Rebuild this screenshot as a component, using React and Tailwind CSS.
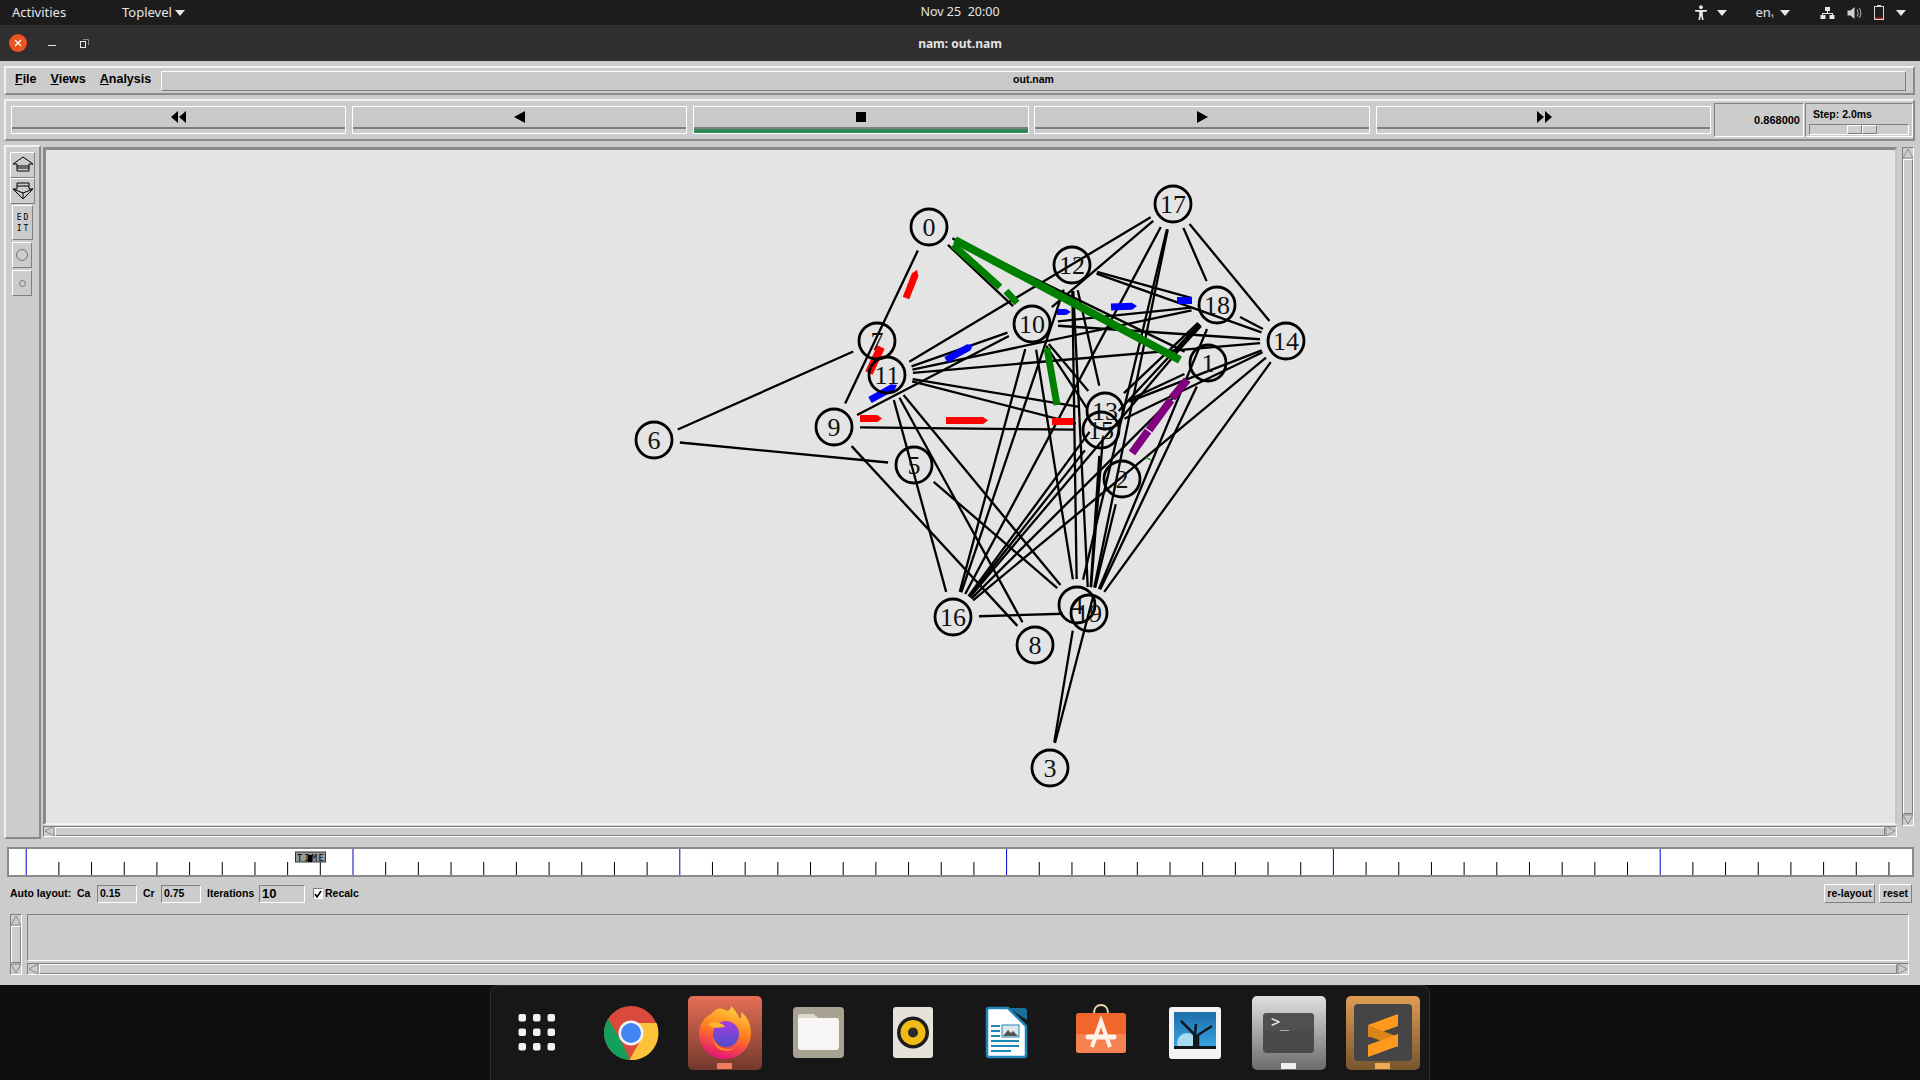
import React from "react";

const raised = "border border-t-white border-l-white border-b-[#7f7f7f] border-r-[#7f7f7f]";
const sunken = "border border-t-[#7f7f7f] border-l-[#7f7f7f] border-b-white border-r-white";
const groove = "border-2 border-t-[#f2f2f2] border-l-[#f2f2f2] border-b-[#8a8a8a] border-r-[#8a8a8a]";
const tkFont = "font-['Liberation_Sans',Arial,sans-serif] font-bold text-black";

const nodes = {
  0: [929, 227], 1: [1208, 363], 2: [1122, 479], 3: [1050, 768], 4: [1077, 605],
  5: [914, 465], 6: [654, 440], 7: [877, 341], 8: [1035, 645], 9: [834, 427],
  10: [1032, 324], 11: [887, 375], 12: [1072, 265], 13: [1105, 411], 14: [1286, 341],
  15: [1101, 430], 16: [953, 617], 17: [1173, 204], 18: [1217, 305], 19: [1089, 613],
};

const edges = [
  [6, 7], [6, 5], [0, 9], [0, 10], [0, 1], [9, 10], [9, 15], [9, 8], [11, 10], [11, 17],
  [11, 18], [11, 14], [11, 13], [11, 15], [11, 16], [11, 8], [11, 4], [5, 4], [16, 19],
  [4, 3], [10, 16], [12, 16], [17, 16], [18, 16], [14, 16], [1, 16], [13, 16],
  [15, 16], [10, 4], [12, 4], [12, 19], [17, 4], [17, 19], [17, 10], [10, 15],
  [10, 13], [12, 13], [10, 18], [10, 14], [12, 18], [12, 14], [17, 18], [17, 14], [18, 14],
  [14, 13], [14, 15], [14, 19], [18, 13], [18, 15], [18, 19], [1, 19], [15, 19],
  [13, 19], [2, 19], [1, 13],
];

// line between two nodes, stopped short of the circles
function edgeLine(a, b) {
  const [x1, y1] = nodes[a];
  const [x2, y2] = nodes[b];
  const len = Math.hypot(x2 - x1, y2 - y1);
  const ux = (x2 - x1) / len;
  const uy = (y2 - y1) / len;
  return { x1: x1 + ux * 26, y1: y1 + uy * 26, x2: x2 - ux * 26, y2: y2 - uy * 26 };
}

// colour, width, tail x/y, nose x/y, pointed nose or not
const packets = [
  ["#ff0000", 7, 906, 298, 917, 270, true],
  ["#ff0000", 8, 869, 373, 881, 347, false],
  ["#0000ff", 7, 870, 400, 897, 385, true],
  ["#0000ff", 7, 946, 360, 973, 345, true],
  ["#ff0000", 7, 860, 418.5, 882, 418.5, true],
  ["#ff0000", 7, 946, 420.5, 988, 420.5, true],
  ["#ff0000", 7, 1052, 421.5, 1073, 421.5, false],
  ["#0000ff", 6, 1057, 312, 1071, 312, true],
  ["#0000ff", 7, 1111, 307, 1137, 306, true],
  ["#0000ff", 7, 1177, 300.5, 1192, 300.5, false],
  ["#008000", 8, 955, 240, 1180, 360, false],
  ["#008000", 7, 953, 245, 1000, 287, false],
  ["#008000", 7, 1006, 291, 1017, 303, false],
  ["#008000", 7, 1047, 348, 1057, 405, false],
  ["#800080", 8, 1187, 380, 1172, 398, false],
  ["#800080", 8, 1171, 400, 1149, 430, false],
  ["#800080", 8, 1148, 431, 1132, 453, false],
  ["#000000", 5, 1200, 325, 1175, 352, false],
  ["#008000", 1, 1145, 457, 1151, 460, false],
];

function packetPoints(w, x1, y1, x2, y2, nose) {
  const len = Math.hypot(x2 - x1, y2 - y1);
  const ux = (x2 - x1) / len;
  const uy = (y2 - y1) / len;
  const nx = (-uy * w) / 2;
  const ny = (ux * w) / 2;
  const tip = nose ? 5 : 0;
  const bx = x2 - ux * tip;
  const by = y2 - uy * tip;
  const pts = [[x1 + nx, y1 + ny], [bx + nx, by + ny]];
  if (nose) pts.push([x2, y2]);
  pts.push([bx - nx, by - ny], [x1 - nx, y1 - ny]);
  return pts.map((p) => p.join(",")).join(" ");
}

function Caret({ className = "" }) {
  return (
    <svg width="10" height="6" viewBox="0 0 10 6" className={className}>
      <polygon points="0,0 10,0 5,6" fill="#e8e8e8" />
    </svg>
  );
}

function TopBar() {
  return (
    <div className="flex h-[25px] items-center bg-[#1c1c1c] px-[14px] text-[13px] text-[#e6e6e6] font-['Noto_Sans',sans-serif]">
      <div className="flex flex-1 basis-0 items-center">
        <span className="-ml-[2px] w-[110px]">Activities</span>
        <span>Toplevel</span>
        <Caret className="ml-[3px]" />
      </div>
      <span className="text-[12.5px] whitespace-pre">Nov 25  20:00</span>
      <div className="flex flex-1 basis-0 items-center justify-end">
        <svg width="14" height="16" viewBox="0 0 14 16" fill="#e8e8e8">
          <circle cx="7" cy="2.2" r="1.9" />
          <path d="M1 5h12v1.4L8.8 7v3.2L9.6 15H8L7 10.8 6 15H4.4l.8-4.8V7L1 6.4z" />
        </svg>
        <Caret className="ml-[9px]" />
        <span className="ml-[28px] text-[#e6e6e6]">en<span className="text-[9px]">₁</span></span>
        <Caret className="ml-[6px]" />
        <svg className="ml-[30px]" width="15" height="14" viewBox="0 0 15 14" fill="#e8e8e8">
          <rect x="5" y="1" width="5" height="4" />
          <rect x="0.5" y="9" width="5" height="4" />
          <rect x="9.5" y="9" width="5" height="4" />
          <path d="M7 5h1v2h5v2h-1V8H3v1H2V7h5z" />
        </svg>
        <svg className="ml-[12px]" width="15" height="14" viewBox="0 0 15 14">
          <path d="M0.5 4.5h3l4-3.5v12l-4-3.5h-3z" fill="#d0d0d0" />
          <path d="M10 3.5q2 3.5 0 7M12.3 2q3 5 0 10" stroke="#9a9a9a" strokeWidth="1.2" fill="none" />
        </svg>
        <svg className="ml-[12px]" width="10" height="15" viewBox="0 0 10 15">
          <rect x="0.5" y="1.5" width="9" height="13" fill="none" stroke="#d8d8d8" />
          <rect x="3" y="0" width="4" height="1.5" fill="#d8d8d8" />
          <rect x="1" y="12.5" width="8" height="1.5" fill="#b02020" />
        </svg>
        <Caret className="ml-[12px]" />
      </div>
    </div>
  );
}

function TitleBar() {
  return (
    <div className="flex h-[36px] items-center bg-[#302e2e] font-['Noto_Sans',sans-serif]">
      <div className="ml-[9px] flex h-[18px] w-[18px] items-center justify-center rounded-full bg-[#e95420]">
        <svg width="8" height="8" viewBox="0 0 8 8">
          <path d="M1 1l6 6M7 1L1 7" stroke="#fff" strokeWidth="1.3" />
        </svg>
      </div>
      <div className="ml-[21px] mt-[5px] h-[1px] w-[8px] bg-[#e6e6e6]" />
      <svg className="ml-[24px]" width="9" height="9" viewBox="0 0 9 9">
        <rect x="0.5" y="2.5" width="5" height="6" fill="none" stroke="#e6e6e6" />
        <path d="M3 0.5h5.5V6" fill="none" stroke="#8a8a8a" />
      </svg>
      <span className="flex-1 text-center pr-[89px] pt-[1px] text-[12px] font-bold text-[#e4e4e4]">nam: out.nam</span>
    </div>
  );
}

function MenuRow() {
  return (
    <div className={`mx-[4px] mr-[5px] flex h-[29px] items-center ${groove}`}>
      <div className={`-mt-[3px] flex w-[155px] pl-[9px] gap-[14px] text-[12.5px] ${tkFont}`}>
        <span><span className="underline">F</span>ile</span>
        <span><span className="underline">V</span>iews</span>
        <span><span className="underline">A</span>nalysis</span>
      </div>
      <div className={`flex h-[20px] w-[1745px] items-center justify-center bg-[#c9c9c9] pb-[2px] text-[10.5px] ${tkFont} ${raised}`}>
        out.nam
      </div>
    </div>
  );
}

function PlayButton({ d, active, width = "w-[335px]", className = "" }) {
  return (
    <div className={`flex h-[28px] flex-col border-x border-x-white ${width} ${className}`}>
      <div className="flex h-[23px] items-center justify-center border-t border-t-white border-b-2 border-b-[#7f7f7f] bg-[#c9c9c9]">
        <svg width="16" height="12" viewBox="0 0 16 12">
          <path d={d} fill="#000" />
        </svg>
      </div>
      <div className={`h-[5px] border-b border-b-white ${active ? "bg-[#2e8b57]" : "bg-[#cccccc]"}`} />
    </div>
  );
}

function PlayRow() {
  return (
    <div className={`mx-[4px] mr-[5px] flex h-[42px] items-center gap-[6px] pl-[5px] ${groove}`}>
      <PlayButton d="M0 6L7 0V12ZM8 6L15 0V12Z" />
      <PlayButton d="M2 6L13 0V12Z" />
      <PlayButton d="M3 1H13V11H3Z" active width="w-[336px]" />
      <PlayButton d="M3 0L14 6L3 12Z" width="w-[336px]" className="-ml-[1px]" />
      <PlayButton d="M1 0L8 6L1 12ZM9 0L16 6L9 12Z" />
      <div className={`-ml-[3px] flex h-[34px] w-[90px] items-center justify-end pr-[3px] text-[11px] ${tkFont} ${sunken}`}>
        0.868000
      </div>
      <div className={`-ml-[5px] h-[34px] w-[108px] pl-[3px] ${tkFont} ${sunken}`}>
        <div className="pl-[4px] text-[10.5px] leading-[20px]">Step: 2.0ms</div>
        <div className={`mr-[3px] flex h-[11px] justify-end pr-[31px] ${sunken}`}>
          <div className={`h-[9px] w-[15px] bg-[#cfcfcf] ${raised}`} />
          <div className={`h-[9px] w-[15px] bg-[#cfcfcf] ${raised}`} />
        </div>
      </div>
    </div>
  );
}

function SideButton({ className, children }) {
  return <div className={`flex items-center justify-center ${raised} ${className}`}>{children}</div>;
}

function SideBar() {
  return (
    <div className={`ml-[4px] flex h-[694px] w-[37px] flex-col pt-[5px] ${groove}`}>
      <SideButton className="ml-[4px] h-[26px] w-[25px]">
        <svg width="22" height="18" viewBox="0 0 22 18" fill="none" stroke="#000">
          <path d="M11 1L1 8h4v2h12V8h4z" />
          <path d="M5 10v5h12v-5M5 12h12" />
        </svg>
      </SideButton>
      <SideButton className="ml-[4px] h-[26px] w-[25px]">
        <svg width="22" height="18" viewBox="0 0 22 18" fill="none" stroke="#000">
          <path d="M5 1h12v3H5zM5 4v3H1l10 10L21 7h-4V4" />
          <path d="M1 7l10 4 10-4M11 11v5" />
        </svg>
      </SideButton>
      <SideButton className="ml-[6px] mt-[1px] h-[35px] w-[21px]">
        <div className="font-['DejaVu_Sans_Mono',monospace] text-[8px] leading-[11px] text-center text-black tracking-[2px] pl-[2px]">
          ED<br />IT
        </div>
      </SideButton>
      <SideButton className="ml-[6px] mt-[2px] h-[26px] w-[20px]">
        <div className="h-[12px] w-[12px] rounded-full border border-[#777]" />
      </SideButton>
      <SideButton className="ml-[6px] mt-[2px] h-[26px] w-[20px]">
        <div className="h-[7px] w-[7px] rounded-full border border-[#777]" />
      </SideButton>
    </div>
  );
}

function Arrow({ dir }) {
  const shapes = {
    up: "5,1 10,10 0,10",
    down: "0,1 10,1 5,10",
    left: "1,5 10,0 10,10",
    right: "10,5 1,0 1,10",
  };
  return (
    <svg width="11" height="11" viewBox="0 0 11 11" className="shrink-0">
      <polygon points={shapes[dir]} fill="none" stroke="#8a8a8a" />
    </svg>
  );
}

function HScroll({ className }) {
  return (
    <div className={`flex h-[11px] items-center ${sunken} ${className}`}>
      <Arrow dir="left" />
      <div className={`h-full flex-1 ${raised}`} />
      <Arrow dir="right" />
    </div>
  );
}

function VScroll({ className }) {
  return (
    <div className={`flex w-[12px] flex-col items-center ${sunken} ${className}`}>
      <Arrow dir="up" />
      <div className={`w-full flex-1 ${raised}`} />
      <Arrow dir="down" />
    </div>
  );
}

function Canvas() {
  return (
    <div className="ml-[2px] mt-[2px] flex flex-col">
      <div className="h-[678px] w-[1854px] bg-[#e4e4e4] border-t-[3px] border-l-[3px] border-t-[#8a8a8a] border-l-[#8a8a8a] border-b-2 border-r-2 border-b-[#f4f4f4] border-r-[#c4c4c4]">
        <svg viewBox="46 150 1849 673" className="block h-full w-full">
          {edges.map(([a, b], i) => (
            <line key={i} {...edgeLine(a, b)} stroke="#000" strokeWidth="2.3" />
          ))}
          {/* 19-3 runs on into the circle of 19 */}
          <line x1="1093" y1="597" x2="1055" y2="743" stroke="#000" strokeWidth="2.3" />
          {packets.map(([color, w, x1, y1, x2, y2, nose], i) => (
            <polygon key={i} points={packetPoints(w, x1, y1, x2, y2, nose)} fill={color} />
          ))}
          {Object.entries(nodes).map(([id, [x, y]]) => (
            <g key={id}>
              <circle cx={x} cy={y} r="18" fill="none" stroke="#000" strokeWidth="2.8" />
              <text x={x} y={y + 9} textAnchor="middle" fontSize="26" fill="#111" fontFamily="'Liberation Serif', serif">
                {id}
              </text>
            </g>
          ))}
        </svg>
      </div>
      <HScroll className="mt-[1px]" />
    </div>
  );
}

function Ruler() {
  const ticks = [];
  for (let i = 0; i < 58; i++) ticks.push(26.2 + i * 32.68);
  return (
    <div className="ml-[7px] mr-[6px] h-[30px] border-2 border-[#8a8a8a] bg-white">
      <svg viewBox="9 849 1903 26" className="block h-full w-full">
        {ticks.map((x, i) =>
          i % 10 === 0 ? (
            <line key={i} x1={x} x2={x} y1="849" y2="875" stroke="#0000d0" strokeWidth="1" />
          ) : (
            <line key={i} x1={x} x2={x} y1="862" y2="875" stroke="#000" strokeWidth="1" />
          )
        )}
        <rect x="295.5" y="852" width="30" height="10" fill="#999" stroke="#333" />
        <text x="297" y="860.5" fontSize="9" fontFamily="'DejaVu Sans Mono', monospace" fill="#000" textLength="27">TIME</text>
        <rect x="308" y="855" width="4" height="7" fill="#000" />
      </svg>
    </div>
  );
}

function Entry({ w, big, children }) {
  return (
    <div className={`flex h-[18px] items-center pl-[2px] ${w} ${sunken} ${big ? "text-[13px]" : "text-[10.5px]"}`}>
      {children}
    </div>
  );
}

function AutoLayoutRow() {
  return (
    <div className={`mx-[10px] mt-[7px] flex h-[19px] items-center text-[10.5px] whitespace-nowrap ${tkFont}`}>
      <span className="w-[60px]">Auto layout:</span>
      <span className="ml-[7px] w-[20px]">Ca</span>
      <Entry w="w-[40px]">0.15</Entry>
      <span className="ml-[6px] w-[18px]">Cr</span>
      <Entry w="w-[40px]">0.75</Entry>
      <span className="ml-[6px] w-[52px]">Iterations</span>
      <Entry w="w-[46px]" big>10</Entry>
      <div className={`ml-[8px] flex h-[11px] w-[10px] items-center justify-center bg-white ${sunken}`}>
        <svg width="8" height="8" viewBox="0 0 8 8">
          <path d="M1 4l2 3 4-6" stroke="#000" strokeWidth="1.6" fill="none" />
        </svg>
      </div>
      <span className="ml-[2px]">Recalc</span>
      <div className="flex-1" />
      <div className={`flex h-[19px] w-[51px] items-center justify-center ${raised}`}>re-layout</div>
      <div className={`ml-[4px] mr-[-2px] flex h-[19px] w-[33px] items-center justify-center ${raised}`}>reset</div>
    </div>
  );
}

function Annotations() {
  return (
    <div className="ml-[10px] mt-[11px] flex h-[61px]">
      <VScroll className="h-[61px]" />
      <div className="ml-[5px] flex w-[1882px] flex-col">
        <div className={`h-[47px] ${sunken}`} />
        <HScroll className="mt-[2px] h-[12px]" />
      </div>
    </div>
  );
}

function AppIcons() {
  return (
    <svg viewBox="0 0 940 95" width="940" height="95" className="block">
      <defs>
        <linearGradient id="ffBg" x1="0" y1="0" x2="0" y2="1">
          <stop offset="0" stopColor="#e56f55" />
          <stop offset="1" stopColor="#73382c" />
        </linearGradient>
        <linearGradient id="termBg" x1="0" y1="0" x2="0" y2="1">
          <stop offset="0" stopColor="#e0e0e0" />
          <stop offset="1" stopColor="#6b6b6b" />
        </linearGradient>
        <linearGradient id="subBg" x1="0" y1="0" x2="0" y2="1">
          <stop offset="0" stopColor="#e09c54" />
          <stop offset="1" stopColor="#77552e" />
        </linearGradient>
        <linearGradient id="ffRing" x1="0.7" y1="0" x2="0.4" y2="1">
          <stop offset="0" stopColor="#ffd23a" />
          <stop offset="0.5" stopColor="#ff7a1f" />
          <stop offset="1" stopColor="#e5117a" />
        </linearGradient>
        <linearGradient id="ffGlobe" x1="0.5" y1="0" x2="0.5" y2="1">
          <stop offset="0" stopColor="#a83be0" />
          <stop offset="1" stopColor="#4a4fc8" />
        </linearGradient>
        <linearGradient id="sky" x1="0" y1="0" x2="0" y2="1">
          <stop offset="0" stopColor="#1e6ea8" />
          <stop offset="1" stopColor="#3aa6e6" />
        </linearGradient>
        <clipPath id="skyClip">
          <rect x="684" y="27" width="42" height="37" />
        </clipPath>
      </defs>

      {/* show apps grid */}
      {[28.5, 43, 57.5].map((x) =>
        [29, 43.5, 58].map((y) => <rect key={`${x}-${y}`} x={x} y={y} width="7.5" height="7.5" rx="2" fill="#f2f2f2" />)
      )}

      {/* chrome */}
      <g transform="translate(114,21)">
        <circle cx="27" cy="27" r="27" fill="#d94a3a" />
        <path d="M4 13L16 33 26 54A27 27 0 0 1 4 13Z" fill="#12a15a" />
        <path d="M27 17H52.5A27 27 0 0 1 25.5 54L37 33Z" fill="#fcc33a" />
        <circle cx="27" cy="27" r="12.5" fill="#f3f3f3" />
        <circle cx="27" cy="27" r="10" fill="#4285f4" />
      </g>

      {/* firefox */}
      <rect x="198" y="11" width="74" height="74" rx="5" fill="url(#ffBg)" />
      <rect x="227" y="78" width="15" height="6" fill="#ef7a5f" />
      <g transform="translate(209,21)">
        <path d="M26 4C21 1 16 3 12 8 4 12 0 20 0 27 0 42 12 53 26 53 40 53 52 42 52 27 52 18 48 10 42 6 43 10 42 12 41 13 39 8 36 4 32 0 32 3 30 6 26 4Z" fill="url(#ffRing)" />
        <circle cx="27" cy="28" r="13" fill="url(#ffGlobe)" />
        <path d="M9 18C16 15 24 17 26 21 20 21 14 24 9 18Z" fill="#ffb52e" />
        <path d="M14 32C17 42 28 45 36 42 28 48 14 44 14 32Z" fill="#ff8a1f" />
      </g>

      {/* files */}
      <rect x="303" y="22" width="51" height="51" rx="4" fill="#a8a293" />
      <path d="M308 32a3 3 0 0 1 3-3h12l5 4h18a3 3 0 0 1 3 3v26a3 3 0 0 1-3 3H311a3 3 0 0 1-3-3z" fill="#f7f6f4" />
      <path d="M308 32a3 3 0 0 1 3-3h12l5 4H308z" fill="#ddd8cc" />

      {/* rhythmbox */}
      <rect x="403" y="22" width="40" height="51" rx="3" fill="#e6e2d8" />
      <circle cx="423" cy="47.5" r="16" fill="#1c1c1c" />
      <circle cx="423" cy="47.5" r="12.5" fill="#f0bb16" />
      <circle cx="423" cy="47.5" r="5" fill="#2a2a2a" />

      {/* writer */}
      <path d="M499 23H518L536 41V70a2 2 0 0 1-2 2H499a2 2 0 0 1-2-2V25a2 2 0 0 1 2-2Z" fill="#fff" stroke="#1b87b8" strokeWidth="2.5" />
      <path d="M518 23l19 12v-9a3 3 0 0 0-3-3z" fill="#1a6f9c" />
      <g fill="#1b87b8">
        <rect x="501" y="40" width="9" height="2" /><rect x="501" y="45" width="9" height="2" />
        <rect x="501" y="50" width="9" height="2" /><rect x="501" y="55" width="28" height="2" />
        <rect x="501" y="60" width="28" height="2" /><rect x="501" y="65" width="20" height="2" />
      </g>
      <rect x="512" y="40" width="17" height="12" fill="#dfe7ec" stroke="#1b87b8" />
      <path d="M513 51l5-6 3 3 2-2 5 5z" fill="#555" />

      {/* software */}
      <path d="M604 28c0-5 3-8 7-8s7 3 7 8" fill="none" stroke="#f0d9a8" strokeWidth="2" />
      <rect x="586" y="28" width="50" height="40" rx="3" fill="#f1662a" />
      <path d="M586 49H636V65a3 3 0 0 1-3 3H589a3 3 0 0 1-3-3z" fill="#f58250" />
      <path d="M602 62l9-26 9 26" stroke="#fff2e8" strokeWidth="4" fill="none" />
      <path d="M598 52H624" stroke="#fff2e8" strokeWidth="5" strokeLinecap="round" fill="none" />

      {/* shotwell */}
      <rect x="679" y="22" width="52" height="52" rx="3" fill="#f4f4f4" />
      <rect x="684" y="27" width="42" height="37" fill="url(#sky)" />
      <circle cx="697" cy="58" r="10" fill="#a8dcf0" clipPath="url(#skyClip)" />
      <rect x="684" y="61" width="42" height="3" fill="#101820" />
      <path d="M704 62L705 50 691 36M705 50L706 39M708 62L708 50 722 41" stroke="#101820" strokeWidth="2.5" fill="none" />
      <rect x="703" y="50" width="6" height="12" fill="#101820" />

      {/* terminal */}
      <rect x="762" y="11" width="74" height="74" rx="5" fill="url(#termBg)" />
      <rect x="773" y="28" width="51" height="40" rx="4" fill="#4a4a4a" />
      <rect x="773" y="28" width="51" height="18" rx="4" fill="#505050" />
      <text x="781" y="42" fontSize="15" fill="#eee" fontFamily="'DejaVu Sans Mono', monospace">{">_"}</text>
      <rect x="791" y="78" width="15" height="6" fill="#eeeeee" />

      {/* sublime */}
      <rect x="856" y="11" width="74" height="74" rx="5" fill="url(#subBg)" />
      <rect x="864" y="19" width="58" height="57" rx="4" fill="#454545" />
      <path d="M878 40L908 29V41L878 52Z" fill="#ff9a1f" />
      <path d="M878 40L908 52V62L878 51Z" fill="#d98418" />
      <path d="M878 60L908 49V61L878 72Z" fill="#ff9a1f" />
      <rect x="885" y="78" width="15" height="6" fill="#eeaa55" />
    </svg>
  );
}

function Dock() {
  return (
    <div className="flex h-[95px] justify-center bg-[#0f0f0f]">
      <div className="h-[95px] w-[940px] rounded-t-[8px] border-x border-t border-[#2b2b2b] bg-[#171717]">
        <div className="-ml-px -mt-px">
          <AppIcons />
        </div>
      </div>
    </div>
  );
}

export default function App() {
  return (
    <div className="flex h-[1080px] w-[1920px] flex-col overflow-hidden bg-[#cccccc]">
      <TopBar />
      <TitleBar />
      <div className="flex h-[924px] flex-col bg-[#cccccc] pt-[5px]">
        <MenuRow />
        <div className="mt-[4px]">
          <PlayRow />
        </div>
        <div className="mt-[4px] flex">
          <SideBar />
          <Canvas />
          <VScroll className="ml-[5px] mt-[2px] h-[679px]" />
        </div>
        <div className="mt-[8px]">
          <Ruler />
        </div>
        <AutoLayoutRow />
        <Annotations />
      </div>
      <Dock />
    </div>
  );
}
